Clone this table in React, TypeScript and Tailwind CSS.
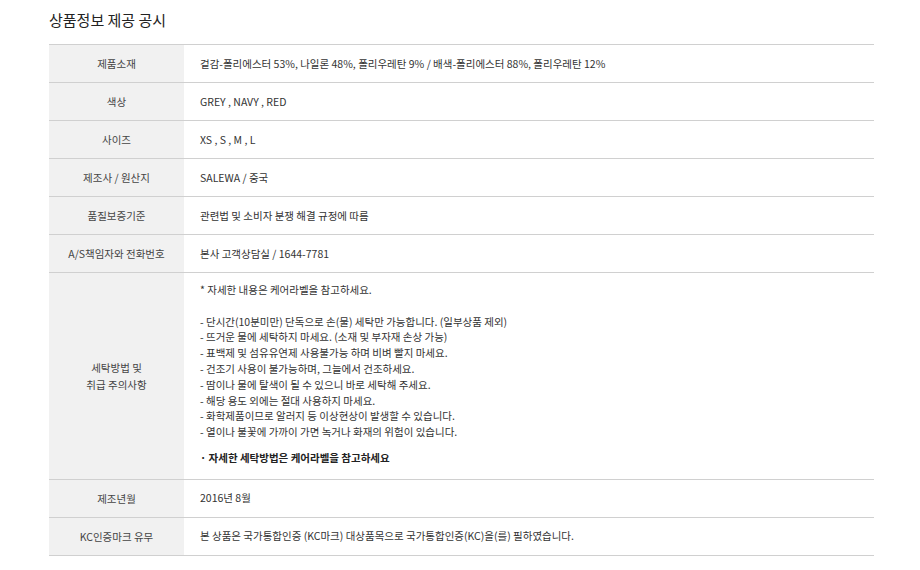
import React from "react";

const font = { fontFamily: '"Noto Sans CJK KR", "Noto Sans", sans-serif' };

function Row({ label, children, tall }: { label: React.ReactNode; children: React.ReactNode; tall?: boolean }) {
  return (
    <div className="flex border-b border-[#d0d0d0]">
      <div className="w-[135px] shrink-0 bg-[#f1f1f1] flex items-center justify-center text-center text-[10.5px] leading-[17px] text-[#444]">
        {label}
      </div>
      <div className={tall ? "flex-1 pl-[16px] pt-[9px] pb-[13px] text-[10.5px] leading-[15.8px] text-[#333]" : "flex-1 pl-[16px] h-[37px] flex items-center text-[10.5px] text-[#333]"}>
        {children}
      </div>
    </div>
  );
}

export default function App() {
  return (
    <div className="bg-white w-[920px] h-[570px] pl-[49px]" style={font}>
      <div className="h-[44px] pt-[8px] text-[15px] leading-[24px] text-[#222]">상품정보 제공 공시</div>
      <div className="w-[825px] border-t border-[#d0d0d0]">
        <Row label="제품소재">겉감-폴리에스터 53%, 나일론 48%, 폴리우레탄 9% / 배색-폴리에스터 88%, 폴리우레탄 12%</Row>
        <Row label="색상">GREY , NAVY , RED</Row>
        <Row label="사이즈">XS , S , M , L</Row>
        <Row label="제조사 / 원산지">SALEWA / 중국</Row>
        <Row label="품질보증기준">관련법 및 소비자 분쟁 해결 규정에 따름</Row>
        <Row label="A/S책임자와 전화번호">본사 고객상담실 / 1644-7781</Row>
        <Row
          tall
          label={
            <span>
              세탁방법 및<br />취급 주의사항
            </span>
          }
        >
          <div>* 자세한 내용은 케어라벨을 참고하세요.</div>
          <div>&nbsp;</div>
          <div>- 단시간(10분미만) 단독으로 손(물) 세탁만 가능합니다. (일부상품 제외)</div>
          <div>- 뜨거운 물에 세탁하지 마세요. (소재 및 부자재 손상 가능)</div>
          <div>- 표백제 및 섬유유연제 사용불가능 하며 비벼 빨지 마세요.</div>
          <div>- 건조기 사용이 불가능하며, 그늘에서 건조하세요.</div>
          <div>- 땀이나 물에 탈색이 될 수 있으니 바로 세탁해 주세요.</div>
          <div>- 해당 용도 외에는 절대 사용하지 마세요.</div>
          <div>- 화학제품이므로 알러지 등 이상현상이 발생할 수 있습니다.</div>
          <div>- 열이나 불꽃에 가까이 가면 녹거나 화재의 위험이 있습니다.</div>
          <div className="mt-[10px] font-bold text-[#222]">· 자세한 세탁방법은 케어라벨을 참고하세요</div>
        </Row>
        <Row label="제조년월">2016년 8월</Row>
        <Row label="KC인증마크 유무">본 상품은 국가통합인증 (KC마크) 대상품목으로 국가통합인증(KC)을(를) 필하였습니다.</Row>
      </div>
    </div>
  );
}
